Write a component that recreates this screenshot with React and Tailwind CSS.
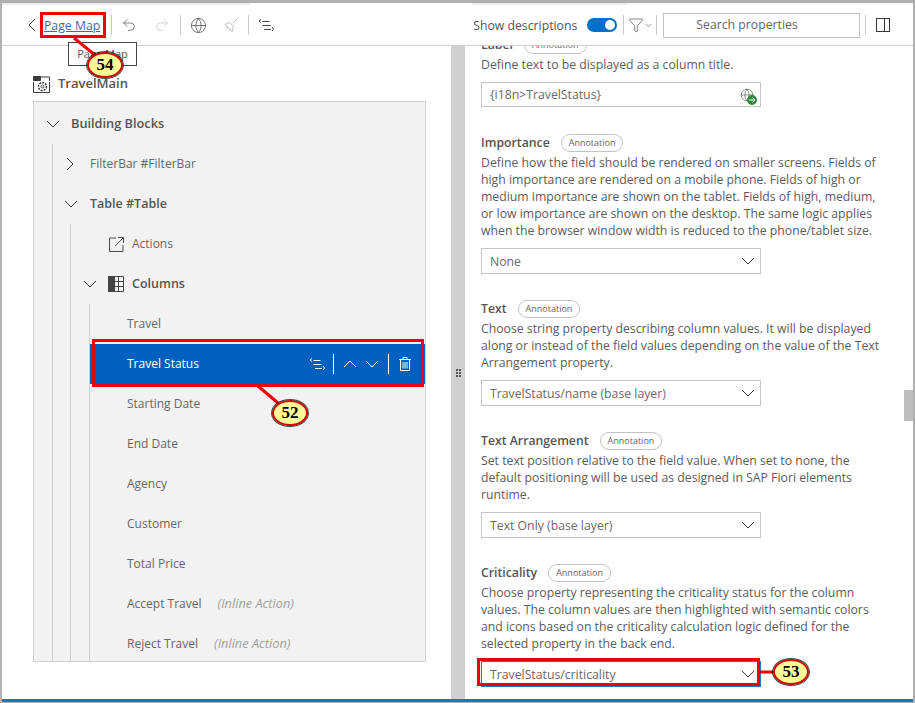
import { ChevronDown, Globe, Undo2, Redo2, Funnel } from 'lucide-react';

const columns = ['Starting Date', 'End Date', 'Agency', 'Customer', 'Total Price'];

const sections = [
  {
    title: 'Importance',
    desc: [
      'Define how the field should be rendered on smaller screens. Fields of',
      'high importance are rendered on a mobile phone. Fields of high or',
      'medium importance are shown on the tablet. Fields of high, medium,',
      'or low importance are shown on the desktop. The same logic applies',
      'when the browser window width is reduced to the phone/tablet size.',
    ],
    value: 'None',
    gap: 'mt-[26px]',
  },
  {
    title: 'Text',
    desc: [
      'Choose string property describing column values. It will be displayed',
      'along or instead of the field values depending on the value of the Text',
      'Arrangement property.',
    ],
    value: 'TravelStatus/name (base layer)',
    gap: 'mt-[25px]',
  },
  {
    title: 'Text Arrangement',
    desc: [
      'Set text position relative to the field value. When set to none, the',
      'default positioning will be used as designed in SAP Fiori elements',
      'runtime.',
    ],
    value: 'Text Only (base layer)',
    gap: 'mt-[25px]',
  },
];

function Down({ className = '' }) {
  return (
    <svg viewBox="0 0 14 8" className={`h-2 w-[14px] shrink-0 ${className}`} fill="none" stroke="currentColor">
      <path d="m1 1 6 6 6-6" />
    </svg>
  );
}

function Up({ className = '' }) {
  return (
    <svg viewBox="0 0 14 8" className={`h-2 w-[14px] shrink-0 ${className}`} fill="none" stroke="currentColor">
      <path d="m1 7 6-6 6 6" />
    </svg>
  );
}

function Side({ className = '', left }) {
  return (
    <svg viewBox="0 0 8 14" className={`h-[14px] w-2 shrink-0 ${className}`} fill="none" stroke="currentColor">
      <path d={left ? 'M7 1 1 7l6 6' : 'm1 1 6 6-6 6'} />
    </svg>
  );
}

function ArrangeIcon({ className }) {
  return (
    <svg viewBox="0 0 16 13" className={className} fill="none" stroke="currentColor" strokeWidth="1">
      <path d="M3 .5 1 2l2 1.500M4.500 2.500h7M4.500 6.500h8M6 10.500h7M14 8l1.500 2L14 12" />
    </svg>
  );
}

function BrushIcon({ className }) {
  return (
    <svg viewBox="0 0 14 14" className={`h-[14px] w-[14px] text-[#bdbdbd] ${className}`} fill="none" stroke="currentColor" strokeWidth="1">
      <path d="m8.500 5.500 5-5M5.500 4.500l4 4-1.500 5-7-7z" />
      <path d="M3.500 8.500l-1 2M6 11l-1 1.500" />
    </svg>
  );
}

function PageIcon() {
  return (
    <svg viewBox="0 0 17 17" className="h-[17px] w-[17px] text-[#3c3c3c]" fill="none" stroke="currentColor">
      <path d="M.5 6v10.500h16V6M.5 1h16v4" />
      <path d="M.5.500h7v4h-7z" fill="currentColor" />
      <circle cx="9.500" cy="10.500" r="1.500" />
      <circle cx="9.500" cy="10.500" r="4" strokeDasharray="2 1" strokeWidth="1.400" />
    </svg>
  );
}

function ActionsIcon() {
  return (
    <svg viewBox="0 0 15 15" className="h-[15px] w-[15px] text-[#4a4a4a]" fill="none" stroke="currentColor">
      <path d="M7 1H.5v13.500h13.500V8M6 9l8-8M9 .5h5.500V6" />
    </svg>
  );
}

function TableIcon() {
  return (
    <svg viewBox="0 0 16 16" className="h-4 w-4 shrink-0 text-[#444]" fill="none" stroke="currentColor">
      <path d="M0 0h7v16H0z" fill="currentColor" stroke="none" />
      <path d="M.5.500h15v15H.5zM10.500.500v15M6 5.500h9.500M6 10.500h9.500" />
    </svg>
  );
}

function TrashIcon({ className }) {
  return (
    <svg viewBox="0 0 12 14" className={`h-[14px] w-3 shrink-0 ${className}`} fill="none" stroke="currentColor">
      <path d="M0 2.500h12M4 2.500v-2h4v2M1.500 2.500v11h9v-11M4 5v6.500M6 5v6.500M8 5v6.500" />
    </svg>
  );
}

function GlobeArrow() {
  return (
    <span className="relative flex h-4 w-4 items-center text-[#444]">
      <Globe size={14} strokeWidth={1} />
      <span className="absolute -bottom-[2px] -right-[1px] flex h-[10px] w-[10px] items-center justify-center rounded-full bg-[#2c8a3a]">
        <svg viewBox="0 0 8 8" className="h-2 w-2 text-white" fill="none" stroke="currentColor">
          <path d="M1 4h6M4.500 1.500 7 4 4.500 6.500" />
        </svg>
      </span>
    </span>
  );
}

function Sep({ className = 'bg-[#c8c8c8]' }) {
  return <span className={`h-5 w-px shrink-0 ${className}`} />;
}

function Row({ children, className = '' }) {
  return <div className={`flex h-10 items-center whitespace-nowrap ${className}`}>{children}</div>;
}

function Tag() {
  return (
    <span className="ml-[11px] flex h-[18px] items-center rounded-full border border-[#c4c4c4] px-[7px] text-[9px] font-normal text-[#666]">
      Annotation
    </span>
  );
}

function SelectBox({ value, focused }) {
  return (
    <div className={`flex h-[26px] w-[280px] items-center justify-between border bg-white pl-2 pr-[5px] text-[12.250px] text-[#6a6a6a] ${focused ? 'border-[#0f7cc9]' : 'border-[#c4c4c4]'}`}>
      <span className="pt-[2px]">{value}</span>
      <Down className="text-[#333]" />
    </div>
  );
}

function Section({ title, desc, value, gap, focused }) {
  return (
    <div className={gap}>
      <div className="flex h-5 items-center text-[12.250px] font-semibold text-[#555]">
        {title}
        <Tag />
      </div>
      <div className="mt-[1px] text-[12.250px] leading-[17px] text-[#5c5c5c]">
        {desc.map((line) => (
          <div key={line} className="whitespace-nowrap">{line}</div>
        ))}
      </div>
      <div className="mt-[9px]">
        <SelectBox value={value} focused={focused} />
      </div>
    </div>
  );
}

function Badge({ n, className }) {
  return (
    <span className={`absolute z-20 flex h-[26px] w-[36px] items-center justify-center rounded-[50%] border-2 border-[#d40000] bg-[#ffff99] text-[17px] font-bold text-black outline outline-1 outline-black/70 ${className}`} style={{ fontFamily: '"Liberation Serif", serif' }}>
      {n}
    </span>
  );
}

export default function App() {
  return (
    <div className="relative flex h-[703px] w-[915px] flex-col overflow-hidden border-t-[3px] border-r-2 border-b border-l-2 border-[#b0b0b0] bg-white" style={{ fontFamily: '"Open Sans", sans-serif' }}>
      {/* strip above the toolbar */}
      <div className="flex h-[2px] shrink-0">
        <span className="w-[248px] bg-[#ececec]" />
        <span className="w-[222px]" />
        <span className="w-[155px] bg-[#ececec]" />
        <span className="flex-1 bg-[#f6f6f6]" />
      </div>

      {/* toolbar */}
      <header className="flex h-[41px] shrink-0 items-center border-b border-[#cfcfcf] text-[#444]">
        <Side left className="ml-[26px]" />
        <a className="ml-2 mt-[2px] text-[12.250px] text-[#3c6f90] underline">Page Map</a>
        <span className="w-[11px] shrink-0" />
        <Sep />
        <Undo2 size={16} strokeWidth={1} className="ml-[9px]" />
        <Redo2 size={16} strokeWidth={1} className="ml-[17px] text-[#bdbdbd]" />
        <span className="w-[10px] shrink-0" />
        <Sep />
        <Globe size={17} strokeWidth={1} className="ml-[9px]" />
        <BrushIcon className="ml-[17px]" />
        <span className="w-[10px] shrink-0" />
        <Sep />
        <ArrangeIcon className="ml-[9px] h-[13px] w-4" />

        <span className="ml-[199px] mt-[2px] text-[12.250px] text-[#555]">Show descriptions</span>
        <span className="ml-[10px] flex h-[14px] w-[30px] items-center justify-end rounded-full bg-[#0070c9] pr-[2px]">
          <span className="h-[10px] w-[10px] rounded-full bg-white" />
        </span>
        <span className="w-[6px] shrink-0" />
        <Sep />
        <Funnel size={16} strokeWidth={1} className="ml-[4px]" />
        <ChevronDown size={9} strokeWidth={1.500} />
        <span className="w-[3px] shrink-0" />
        <Sep />
        <div className="ml-[6px] flex h-[25px] w-[197px] items-center border border-[#c4c4c4] pl-[32px] text-[12.250px] text-[#666]">Search properties</div>
        <span className="w-[5px] shrink-0" />
        <Sep />
        <span className="ml-[10px] flex h-[14px] w-[14px] justify-end border border-[#333]">
          <span className="h-full w-[5px] border-l border-[#333]" />
        </span>
      </header>

      <div className="flex min-h-0 flex-1 border-b-[3px] border-[#0f7cc9]">
        {/* page map */}
        <section className="w-[449px] shrink-0 pl-[31px]">
          <div className="mt-[28px] flex h-5 items-center text-[#555]">
            <PageIcon />
            <span className="ml-2 text-[13px] font-semibold">TravelMain</span>
          </div>
          <div className="mt-[7px] h-[561px] w-[393px] overflow-hidden border border-[#cfcfcf] bg-[#f2f2f2] pt-[2px] text-[12px] text-[#666]">
            <Row className="text-[12.750px] font-semibold text-[#555]">
              <Down className="ml-3 mr-[11px] text-[#333]" />
              Building Blocks
            </Row>
            <div className="ml-[18px] border-l border-[#cfcfcf]">
              <Row>
                <Side className="ml-[13px] mr-4 text-[#333]" />
                FilterBar #FilterBar
              </Row>
              <Row className="text-[12.500px] font-semibold text-[#555]">
                <Down className="ml-[11px] mr-3 text-[#333]" />
                Table #Table
              </Row>
              <div className="ml-[17px] border-l border-[#cfcfcf]">
                <Row>
                  <span className="ml-[38px] mr-2 flex"><ActionsIcon /></span>
                  Actions
                </Row>
                <Row className="text-[12.500px] font-semibold text-[#555]">
                  <Down className="ml-3 mr-[11px] text-[#333]" />
                  <TableIcon />
                  <span className="ml-2">Columns</span>
                </Row>
                <div className="ml-[18px] border-l border-[#cfcfcf]">
                  <Row className="pl-[37px]">Travel</Row>
                  <Row className="justify-between bg-[#0060bf] pl-[37px] pr-[14px] font-medium text-white">
                    Travel Status
                    <span className="flex items-center">
                      <ArrangeIcon className="h-[13px] w-4" />
                      <Sep className="ml-2 bg-white" />
                      <Up className="ml-[9px]" />
                      <Down className="ml-2" />
                      <Sep className="ml-[9px] bg-white" />
                      <TrashIcon className="ml-[10px]" />
                    </span>
                  </Row>
                  {columns.map((c) => (
                    <Row key={c} className="pl-[37px]">{c}</Row>
                  ))}
                  <Row className="pl-[37px]">
                    Accept Travel
                    <i className="ml-4 text-[12.750px] text-[#a0a0a0]">(Inline Action)</i>
                  </Row>
                  <Row className="pl-[37px]">
                    Reject Travel
                    <i className="ml-4 text-[12.750px] text-[#a0a0a0]">(Inline Action)</i>
                  </Row>
                </div>
              </div>
            </div>
          </div>
        </section>

        {/* splitter */}
        <div className="flex w-[14px] shrink-0 items-center justify-center bg-[#d0d0d0]">
          <span className="grid grid-cols-2 gap-[1px]">
            {[0, 1, 2, 3, 4, 5].map((d) => (
              <span key={d} className="h-[2px] w-[2px] bg-[#555]" />
            ))}
          </span>
        </div>

        {/* properties */}
        <section className="min-w-0 flex-1 overflow-hidden pl-4">
          <div className="-mt-[11px]">
            <div className="flex h-5 items-center text-[12.250px] font-semibold text-[#555]">
              Label
              <Tag />
            </div>
            <div className="mt-[1px] text-[12.250px] leading-[17px] text-[#5c5c5c]">Define text to be displayed as a column title.</div>
            <div className="mt-[9px] flex h-[25px] w-[280px] items-center justify-between border border-[#c4c4c4] pl-2 pr-[4px] text-[12.250px] text-[#6a6a6a]">
              <span className="pt-[2px]">{'{i18n>TravelStatus}'}</span>
              <GlobeArrow />
            </div>
            {sections.map((s) => (
              <Section key={s.title} {...s} />
            ))}
            <Section
              title="Criticality"
              desc={[
                'Choose property representing the criticality status for the column',
                'values. The column values are then highlighted with semantic colors',
                'and icons based on the criticality calculation logic defined for the',
                'selected property in the back end.',
              ]}
              value="TravelStatus/criticality"
              gap="mt-[25px]"
              focused
            />
          </div>
        </section>

        {/* scrollbar */}
        <div className="w-[9px] shrink-0 pt-[344px]">
          <div className="h-[31px] w-[9px] bg-[#bdbdbd]" />
        </div>
      </div>

      {/* callouts */}
      <span className="absolute left-[38px] top-[9px] z-10 h-[26px] w-[66px] border-[3px] border-[#f00000]" />
      <span className="absolute left-[66px] top-[39px] flex h-[24px] w-[69px] items-center justify-center border border-[#444] bg-white text-[11px] text-[#555]">Page Map</span>
      <svg className="absolute left-0 top-0 z-10 h-[699px] w-[911px]" fill="none" stroke="#f00000" strokeWidth="3">
        <path d="M72 35 93 52M256 383l20 17M758 669h16" />
      </svg>
      <Badge n="54" className="left-[85px] top-[49px]" />
      <span className="absolute left-[90px] top-[336px] z-10 h-[48px] w-[332px] border-[3px] border-[#f00000]" />
      <Badge n="52" className="left-[270px] top-[397px]" />
      <span className="absolute left-[475px] top-[655px] z-10 h-[28px] w-[283px] border-[3px] border-[#f00000]" />
      <Badge n="53" className="left-[771px] top-[656px]" />
    </div>
  );
}
